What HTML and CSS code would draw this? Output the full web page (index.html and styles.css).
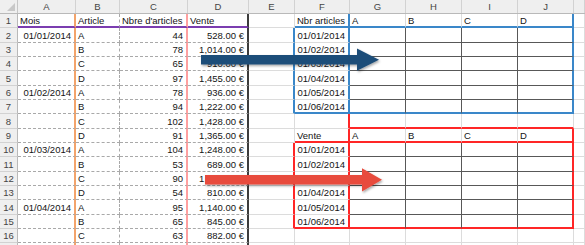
FILE: index.html
```html
<!DOCTYPE html>
<html>
<head>
<meta charset="utf-8">
<link rel="stylesheet" href="styles.css">
</head>
<body>
<div class="sheet">
  <div class="row head">
    <div class="corner"><span class="tri"></span></div>
    <div class="ch">A</div><div class="ch">B</div><div class="ch">C</div><div class="ch">D</div><div class="ch">E</div><div class="ch">F</div><div class="ch">G</div><div class="ch">H</div><div class="ch">I</div><div class="ch">J</div><div class="ch"></div>
  </div>

  <div class="row">
    <div class="rh">1</div>
    <div class="c ca hd">Mois</div><div class="c cb hd">Article</div><div class="c cc hd">Nbre d'articles</div><div class="c cd hd">Vente</div>
    <div class="c"></div><div class="c br-blue bb-blue">Nbr articles</div><div class="c bb-blue">A</div><div class="c bb-blue">B</div><div class="c bb-blue">C</div><div class="c br-blue bb-blue">D</div><div class="c"></div>
  </div>

  <div class="row">
    <div class="rh">2</div>
    <div class="c ca num">01/01/2014</div><div class="c cb">A</div><div class="c cc num">44</div><div class="c cd num">528.00 €</div>
    <div class="c br-blue"></div><div class="c br-blue num">01/01/2014</div><div class="c br-dark bb-dark"></div><div class="c br-dark bb-dark"></div><div class="c br-dark bb-dark"></div><div class="c br-blue bb-dark"></div><div class="c"></div>
  </div>

  <div class="row">
    <div class="rh">3</div>
    <div class="c ca num"></div><div class="c cb">B</div><div class="c cc num">78</div><div class="c cd num">1,014.00 €</div>
    <div class="c br-blue"></div><div class="c br-blue num">01/02/2014</div><div class="c br-dark bb-dark"></div><div class="c br-dark bb-dark"></div><div class="c br-dark bb-dark"></div><div class="c br-blue bb-dark"></div><div class="c"></div>
  </div>

  <div class="row">
    <div class="rh">4</div>
    <div class="c ca num"></div><div class="c cb">C</div><div class="c cc num">65</div><div class="c cd num">910.00 €</div>
    <div class="c br-blue"></div><div class="c br-blue num">01/03/2014</div><div class="c br-dark bb-dark"></div><div class="c br-dark bb-dark"></div><div class="c br-dark bb-dark"></div><div class="c br-blue bb-dark"></div><div class="c"></div>
  </div>

  <div class="row">
    <div class="rh">5</div>
    <div class="c ca num"></div><div class="c cb">D</div><div class="c cc num">97</div><div class="c cd num">1,455.00 €</div>
    <div class="c br-blue"></div><div class="c br-blue num">01/04/2014</div><div class="c br-dark bb-dark"></div><div class="c br-dark bb-dark"></div><div class="c br-dark bb-dark"></div><div class="c br-blue bb-dark"></div><div class="c"></div>
  </div>

  <div class="row">
    <div class="rh">6</div>
    <div class="c ca num">01/02/2014</div><div class="c cb">A</div><div class="c cc num">78</div><div class="c cd num">936.00 €</div>
    <div class="c br-blue"></div><div class="c br-blue num">01/05/2014</div><div class="c br-dark bb-dark"></div><div class="c br-dark bb-dark"></div><div class="c br-dark bb-dark"></div><div class="c br-blue bb-dark"></div><div class="c"></div>
  </div>

  <div class="row">
    <div class="rh">7</div>
    <div class="c ca num"></div><div class="c cb">B</div><div class="c cc num">94</div><div class="c cd num">1,222.00 €</div>
    <div class="c br-blue"></div><div class="c br-blue bb-blue num">01/06/2014</div><div class="c br-dark bb-blue"></div><div class="c br-dark bb-blue"></div><div class="c br-dark bb-blue"></div><div class="c br-blue bb-blue"></div><div class="c"></div>
  </div>

  <div class="row">
    <div class="rh">8</div>
    <div class="c ca num"></div><div class="c cb">C</div><div class="c cc num">102</div><div class="c cd num">1,428.00 €</div>
    <div class="c"></div><div class="c br-red"></div><div class="c bb-red"></div><div class="c bb-red"></div><div class="c bb-red"></div><div class="c bb-red"></div><div class="c"></div>
  </div>

  <div class="row">
    <div class="rh">9</div>
    <div class="c ca num"></div><div class="c cb">D</div><div class="c cc num">91</div><div class="c cd num">1,365.00 €</div>
    <div class="c"></div><div class="c br-red bb-red">Vente</div><div class="c bb-red">A</div><div class="c bb-red">B</div><div class="c bb-red">C</div><div class="c br-red bb-red">D</div><div class="c"></div>
  </div>

  <div class="row">
    <div class="rh">10</div>
    <div class="c ca num">01/03/2014</div><div class="c cb">A</div><div class="c cc num">104</div><div class="c cd num">1,248.00 €</div>
    <div class="c br-red"></div><div class="c br-red num">01/01/2014</div><div class="c br-dark bb-dark"></div><div class="c br-dark bb-dark"></div><div class="c br-dark bb-dark"></div><div class="c br-red bb-dark"></div><div class="c"></div>
  </div>

  <div class="row">
    <div class="rh">11</div>
    <div class="c ca num"></div><div class="c cb">B</div><div class="c cc num">53</div><div class="c cd num">689.00 €</div>
    <div class="c br-red"></div><div class="c br-red num">01/02/2014</div><div class="c br-dark bb-dark"></div><div class="c br-dark bb-dark"></div><div class="c br-dark bb-dark"></div><div class="c br-red bb-dark"></div><div class="c"></div>
  </div>

  <div class="row">
    <div class="rh">12</div>
    <div class="c ca num"></div><div class="c cb">C</div><div class="c cc num">90</div><div class="c cd num">1,260.00 €</div>
    <div class="c br-red"></div><div class="c br-red num">01/03/2014</div><div class="c br-dark bb-dark"></div><div class="c br-dark bb-dark"></div><div class="c br-dark bb-dark"></div><div class="c br-red bb-dark"></div><div class="c"></div>
  </div>

  <div class="row">
    <div class="rh">13</div>
    <div class="c ca num"></div><div class="c cb">D</div><div class="c cc num">54</div><div class="c cd num">810.00 €</div>
    <div class="c br-red"></div><div class="c br-red num">01/04/2014</div><div class="c br-dark bb-dark"></div><div class="c br-dark bb-dark"></div><div class="c br-dark bb-dark"></div><div class="c br-red bb-dark"></div><div class="c"></div>
  </div>

  <div class="row">
    <div class="rh">14</div>
    <div class="c ca num">01/04/2014</div><div class="c cb">A</div><div class="c cc num">95</div><div class="c cd num">1,140.00 €</div>
    <div class="c br-red"></div><div class="c br-red num">01/05/2014</div><div class="c br-dark bb-dark"></div><div class="c br-dark bb-dark"></div><div class="c br-dark bb-dark"></div><div class="c br-red bb-dark"></div><div class="c"></div>
  </div>

  <div class="row">
    <div class="rh">15</div>
    <div class="c ca num"></div><div class="c cb">B</div><div class="c cc num">65</div><div class="c cd num">845.00 €</div>
    <div class="c br-red"></div><div class="c br-red bb-red num">01/06/2014</div><div class="c br-dark bb-red"></div><div class="c br-dark bb-red"></div><div class="c br-dark bb-red"></div><div class="c br-red bb-red"></div><div class="c"></div>
  </div>

  <div class="row">
    <div class="rh">16</div>
    <div class="c ca num"></div><div class="c cb">C</div><div class="c cc num">63</div><div class="c cd num">882.00 €</div>
    <div class="c"></div><div class="c"></div><div class="c"></div><div class="c"></div><div class="c"></div><div class="c"></div><div class="c"></div>
  </div>

  <div class="row">
    <div class="rh"></div>
    <div class="c ca"></div><div class="c cb"></div><div class="c cc"></div><div class="c cd"></div>
    <div class="c"></div><div class="c"></div><div class="c"></div><div class="c"></div><div class="c"></div><div class="c"></div><div class="c"></div>
  </div>

  <svg class="arrows" width="585" height="245" viewBox="0 0 585 245">
    <defs>
      <filter id="sh" x="-10%" y="-50%" width="120%" height="200%">
        <feDropShadow dx="1" dy="1.5" stdDeviation="1" flood-color="#000" flood-opacity="0.35"/>
      </filter>
    </defs>
    <polygon filter="url(#sh)" fill="#1f4e79" points="201,55 357,55 357,48.5 379,59.7 357,70.8 357,64.5 201,64.5"/>
    <polygon filter="url(#sh)" fill="#e84c3d" points="205,175 362,175 362,168.3 382,179.8 362,191.5 362,184.5 205,184.5"/>
  </svg>
</div>
</body>
</html>
```

FILE: styles.css
```css
* { box-sizing: border-box; }

html, body {
  margin: 0;
  padding: 0;
  background: #ffffff;
}

body {
  font-family: "Liberation Sans", Arial, sans-serif;
  font-size: 9.5px;
  color: #141414;
  overflow: hidden;
}

.sheet {
  position: relative;
  width: 585px;
  height: 245px;
  overflow: hidden;
}

.row {
  display: grid;
  grid-template-columns: 18px 58px 44px 68px 61px 46px 55px 56px 56px 56px 56px 11px;
  height: 14.333px;
}

.row.head {
  height: 14px;
  background: #efefef;
  border-bottom: 1px solid #b9b9b9;
}

.corner {
  position: relative;
  border-right: 1px solid #c6c6c6;
}

.tri {
  position: absolute;
  right: 2px;
  bottom: 2px;
  width: 0;
  height: 0;
  border-left: 8px solid transparent;
  border-bottom: 8px solid #c8c8c8;
}

.ch {
  display: flex;
  align-items: center;
  justify-content: center;
  color: #444;
  border-right: 1px solid #d2d2d2;
  line-height: 1;
  padding-top: 1px;
}

.rh {
  display: flex;
  align-items: center;
  justify-content: center;
  background: #efefef;
  color: #444;
  border-right: 1px solid #b9b9b9;
  border-bottom: 1px solid #d2d2d2;
  line-height: 1;
  padding-top: 1px;
}

.c {
  display: flex;
  align-items: center;
  padding: 1px 2px 0 2px;
  line-height: 1;
  white-space: nowrap;
  overflow: visible;
  border-right: 1px solid #dcdcdc;
  border-bottom: 1px solid #dcdcdc;
}

.num {
  justify-content: flex-end;
  padding-right: 3px;
}

/* Data table A:D */
.ca {
  border-right: 2px solid #f3a46b;
  border-bottom: 1px dashed #a9a9a9;
}

.cb {
  border-right: 1px dashed #a9a9a9;
  border-bottom: 1px dashed #a9a9a9;
}

.cc {
  border-right: 2px solid #ffa0a0;
  border-bottom: 1px dashed #a9a9a9;
}

.cd {
  border-right: 2px solid #3c3c3c;
  border-bottom: 1px dashed #a9a9a9;
}

.hd {
  border-bottom: 2px solid #7b3db0;
  justify-content: flex-start;
}

/* Summary tables */
.br-blue { border-right: 2px solid #3a87c9; }
.bb-blue { border-bottom: 2px solid #3a87c9; }
.br-red { border-right: 2px solid #ff2626; }
.bb-red { border-bottom: 2px solid #ff2626; }
.br-dark { border-right: 1px solid #585858; }
.bb-dark { border-bottom: 1px solid #585858; }

.arrows {
  position: absolute;
  left: 0;
  top: 0;
  pointer-events: none;
}
```
